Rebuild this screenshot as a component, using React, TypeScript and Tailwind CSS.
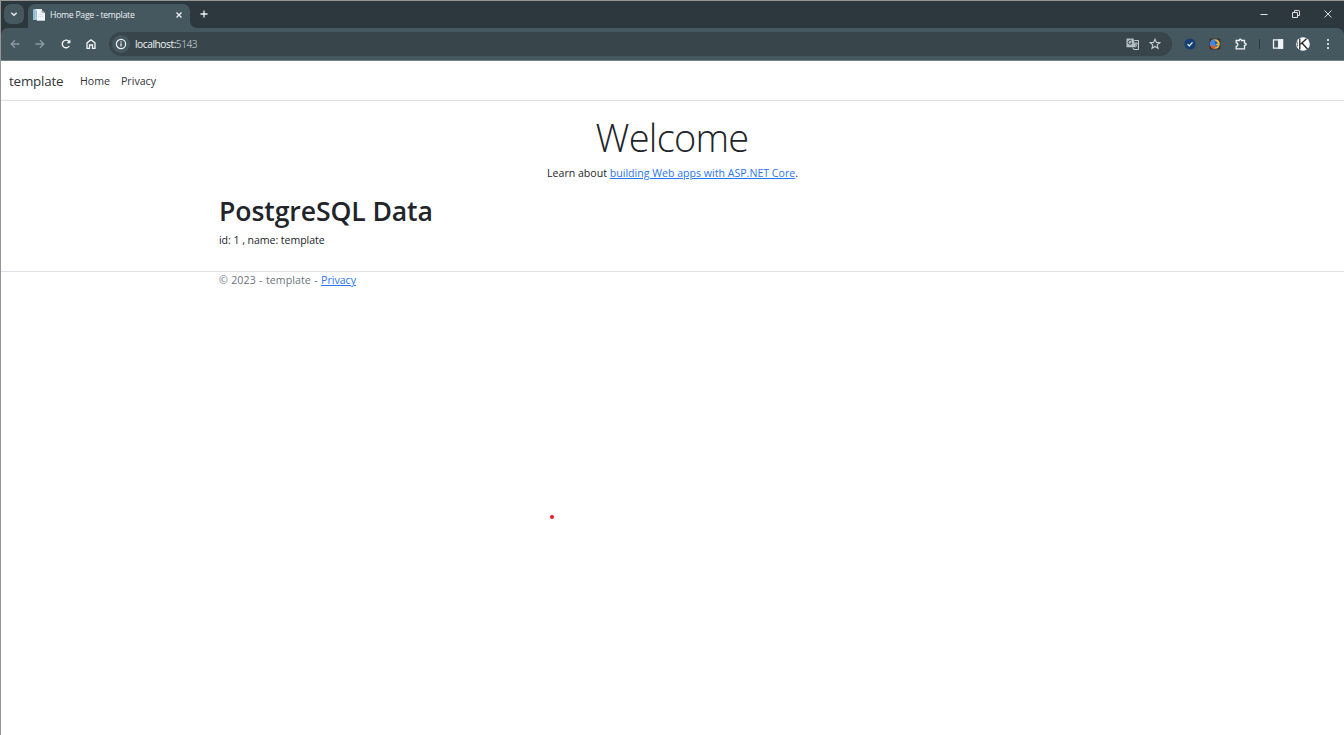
import React from "react";

type IconProps = { children: React.ReactNode; size?: string; box?: string };

function Icon({ children, size = "size-3", box = "0 0 12 12" }: IconProps) {
  return (
    <svg viewBox={box} className={`${size} shrink-0`} fill="none" stroke="currentColor" strokeWidth="1.3">
      {children}
    </svg>
  );
}

function TabStrip() {
  return (
    <div className="flex h-[27px] bg-[#2d383e] text-[#eef2f4]">
      <div className="flex w-[27px] shrink-0 pt-[3px] pl-[3px]">
        <button className="flex size-5 items-center justify-center rounded-[7px] bg-[#45575f]">
          <Icon size="size-2" box="0 0 8 8">
            <path d="M1.3 2.7 4 5.3l2.7-2.6" />
          </Icon>
        </button>
      </div>
      <div className="mt-[3px] flex h-6 w-[162px] shrink-0 items-center rounded-t-[7px] bg-[#45575f] pl-[5px] pr-[7px] pb-[3px]">
        <svg viewBox="0 0 12 12" className="size-3 shrink-0">
          <path d="M1 0h8v11H0V2z" fill="#e6f0f6" />
          <path d="M1.2 0h1.3v11H0V2z" fill="#8fbcd9" />
          <path d="M4 1h4.5L12 4v7.5H4z" fill="#f4f7f9" />
          <path d="M3.3 1.5v9.8" stroke="#6d9fc2" strokeWidth=".8" />
          <path d="M8.5 1v3H12z" fill="#9fb4c2" />
          <path d="M5.5 5.5h4.5M5.5 7.5h4.5M4 11.5h8" stroke="#c9d6de" strokeWidth=".7" />
        </svg>
        <span className="ml-[5px] text-[8.7px] leading-3 font-medium tracking-[-0.28px] whitespace-nowrap">Home Page - template</span>
        <span className="ml-auto flex">
          <Icon size="size-2" box="0 0 8 8">
            <path d="m1.5 1.5 5 5m0-5-5 5" />
          </Icon>
        </span>
      </div>
      <svg viewBox="0 0 7 7" className="size-[7px] shrink-0 self-end">
        <path d="M0 0a7 7 0 0 0 7 7H0z" fill="#45575f" />
      </svg>
      <button className="flex h-[26px] w-[14px] items-center justify-center">
        <Icon size="size-2" box="0 0 8 8">
          <path d="M4 .5v7M.5 4h7" />
        </Icon>
      </button>
      <div className="ml-auto flex h-[26px] items-center gap-[22px] pr-[11px] text-[#dce1e3]">
        <Icon size="size-[10px]" box="0 0 10 10">
          <path d="M1.5 5.5h7" strokeWidth="1" />
        </Icon>
        <Icon size="size-[10px]" box="0 0 10 10">
          <path d="M1.5 3.5h5v5h-5zM3.5 3.5v-2h4.3q.7 0 .7.7v4.3h-2" strokeWidth="1" />
        </Icon>
        <Icon size="size-[10px]" box="0 0 10 10">
          <path d="m1.5 1.5 7 7m0-7-7 7" strokeWidth="1" />
        </Icon>
      </div>
    </div>
  );
}

function Toolbar() {
  return (
    <div className="bg-[#2d383e]">
      <div className="flex h-8 items-center rounded-t-[7px] bg-[#45575f] pl-2 text-[#f1f4f5]">
        <span className="flex w-[25px] text-[#8c999f]">
          <Icon>
            <path d="M10.5 6h-8M6 2.3 2.2 6 6 9.7" />
          </Icon>
        </span>
        <span className="flex w-[26px] text-[#8c999f]">
          <Icon>
            <path d="M1.5 6h8M6 2.3 9.8 6 6 9.7" />
          </Icon>
        </span>
        <span className="flex w-[25px]">
          <Icon>
            <path d="M9.3 8A3.8 3.8 0 1 1 8.8 3.3L9.8 4.5" strokeWidth="1.4" />
            <path d="M10.4 1.5v3.8H6.6z" fill="currentColor" stroke="none" />
          </Icon>
        </span>
        <span className="flex w-[24px]">
          <Icon>
            <path d="M2 10.3V4.9L6 1.8l4 3.1v5.4H7.5V7h-3v3.3z" />
          </Icon>
        </span>
        <div className="flex h-6 w-[1063px] shrink-0 items-center rounded-full bg-[#38464c] pr-[11px] pl-[3px]">
          <span className="flex size-[18px] items-center justify-center rounded-full bg-[#45575f]">
            <Icon>
              <circle cx="6" cy="6" r="4.6" strokeWidth="1.2" />
              <path d="M6 5.3v3.2M6 3.3v1.1" strokeWidth="1.2" />
            </Icon>
          </span>
          <span className="ml-[5px] text-[10.2px] leading-4 tracking-[-0.5px]">
            <span className="font-medium tracking-[-0.45px]">localhost:</span>
            <span className="text-[#aab4b9]">5143</span>
          </span>
          <span className="ml-auto flex items-center gap-[10px] text-[#c5cdd1]">
            <svg viewBox="0 0 13 12" className="h-3 w-[13px]" fill="none" stroke="currentColor">
              <path d="M.5.5h7l2.3 8.8H.5z" fill="#b5bec2" stroke="none" />
              <path d="M5.8 3.2a2 2 0 1 0 .3 1.8H4.4" stroke="#38464c" strokeWidth="1" />
              <path d="M8.5 2.5h4v9H7.7l-.9-1.8" strokeWidth="1" />
              <path d="M8.8 5.3h3M10.2 4.3v1M11.3 5.5q-.6 2-2 3M9.2 6q.6 1.8 2.2 2.8" strokeWidth=".8" />
            </svg>
            <Icon>
              <path d="m6 1.3 1.4 3.1 3.4.3-2.6 2.2.8 3.4L6 8.5l-3 1.8.8-3.4-2.6-2.2 3.4-.3z" strokeWidth="1.1" />
            </Icon>
          </span>
        </div>
        <span className="ml-[12px] flex w-[25px]">
          <svg viewBox="0 0 12 12" className="size-3">
            <circle cx="6" cy="6" r="5.6" fill="#153f70" />
            <path d="m3.6 6.1 1.7 1.7 3.2-3.4" fill="none" stroke="#fff" strokeWidth="1.2" />
          </svg>
        </span>
        <span className="flex w-[26px]">
          <svg viewBox="0 0 12 12" className="size-3">
            <rect x=".5" y=".5" width="11" height="11" rx="1" fill="#343b40" />
            <circle cx="6" cy="6" r="4.8" fill="#f5b52c" />
            <path d="M6 1.2a4.8 4.8 0 0 0-4.6 6.2L6 8z" fill="#3c86ea" />
            <path d="M1.4 7.4A4.8 4.8 0 0 0 6 10.8V8z" fill="#e0562c" />
            <path d="M6 2.5 9 5 6 7z" fill="#2458ba" />
            <path d="M6 7h3.5L6.5 9.8z" fill="#2f76db" />
          </svg>
        </span>
        <span className="flex w-[24px]">
          <Icon>
            <path d="M1.2 2.5h3V2q0-.9 1.1-.9T6.4 2v.5h3.1v2.7h.5q1.2 0 1.2 1.1T10 7.4h-.5v3.4H1.2V8.3q1.7 0 1.7-1.7T1.2 4.9z" />
          </Icon>
        </span>
        <span className="h-[10px] w-px bg-[#2b363c]" />
        <span className="ml-[12px] flex w-[24px]">
          <Icon>
            <path d="M1.5 1.8h9v8.4h-9z" />
            <path d="M6.7 1.8h3.8v8.4H6.7z" fill="currentColor" />
          </Icon>
        </span>
        <span className="flex w-[30px]">
          <svg viewBox="0 0 14 14" className="size-[14px]">
            <circle cx="7" cy="7" r="6.8" fill="#fff" />
            <path d="M3.8 1.5v11" stroke="#20272b" strokeWidth="1.3" />
            <path d="M10.5 1.8 4.5 7.2M6 6l5.5 6" fill="none" stroke="#20272b" strokeWidth="1.4" />
            <path d="M1.6 4.5v5" stroke="#6b767c" strokeWidth=".9" />
          </svg>
        </span>
        <svg viewBox="0 0 4 12" className="h-3 w-1 shrink-0" fill="currentColor">
          <circle cx="2" cy="2" r="1.1" />
          <circle cx="2" cy="6" r="1.1" />
          <circle cx="2" cy="10" r="1.1" />
        </svg>
      </div>
      <div className="h-px bg-[#74828a]" />
    </div>
  );
}

export default function App() {
  return (
    <div className="relative h-[735px] w-full overflow-hidden border-t border-l border-[#959595] bg-white font-['Open_Sans','Noto_Sans',sans-serif] text-[10.6px] text-[#212529]">
      <TabStrip />
      <Toolbar />
      <header className="flex h-10 items-center border-b border-[#dee2e6] pt-[2px] pl-2 text-[#303438]">
        <span className="w-[71px] text-[13.4px] tracking-[-0.2px]">template</span>
        <span className="w-[41px]">Home</span>
        <span>Privacy</span>
      </header>
      <main className="h-[171px] border-b border-[#dee2e6] pt-[15px]">
        <div className="text-center">
          <h1 className="h-[49px] pr-px text-[38px] leading-[42px] font-light tracking-[-0.75px]">Welcome</h1>
          <p className="h-[17px] leading-[17px]">
            Learn about <a className="text-[#2b76f5] underline">building Web apps with ASP.NET Core</a>.
          </p>
        </div>
        <div className="pl-[218px]">
          <h2 className="mt-3 h-[36px] text-[26.6px] leading-[34px] font-[560] tracking-[-0.1px]">PostgreSQL Data</h2>
          <p className="mt-[2px] leading-[17px] tracking-[-0.06px]">id: 1 , name: template</p>
        </div>
      </main>
      <footer className="pl-[218px] leading-[17px] text-[#6c757d]">
        <span className="tracking-[0.08px] [word-spacing:0.5px]">© 2023 - template - </span>
        <a className="text-[#2b76f5] underline">Privacy</a>
      </footer>
      <div className="absolute top-[251px] -left-px h-[19px] w-px bg-[#1f8050]" />
      <div className="absolute top-[514px] left-[549px] size-1 rounded-full bg-[#ee1c24]" />
    </div>
  );
}
